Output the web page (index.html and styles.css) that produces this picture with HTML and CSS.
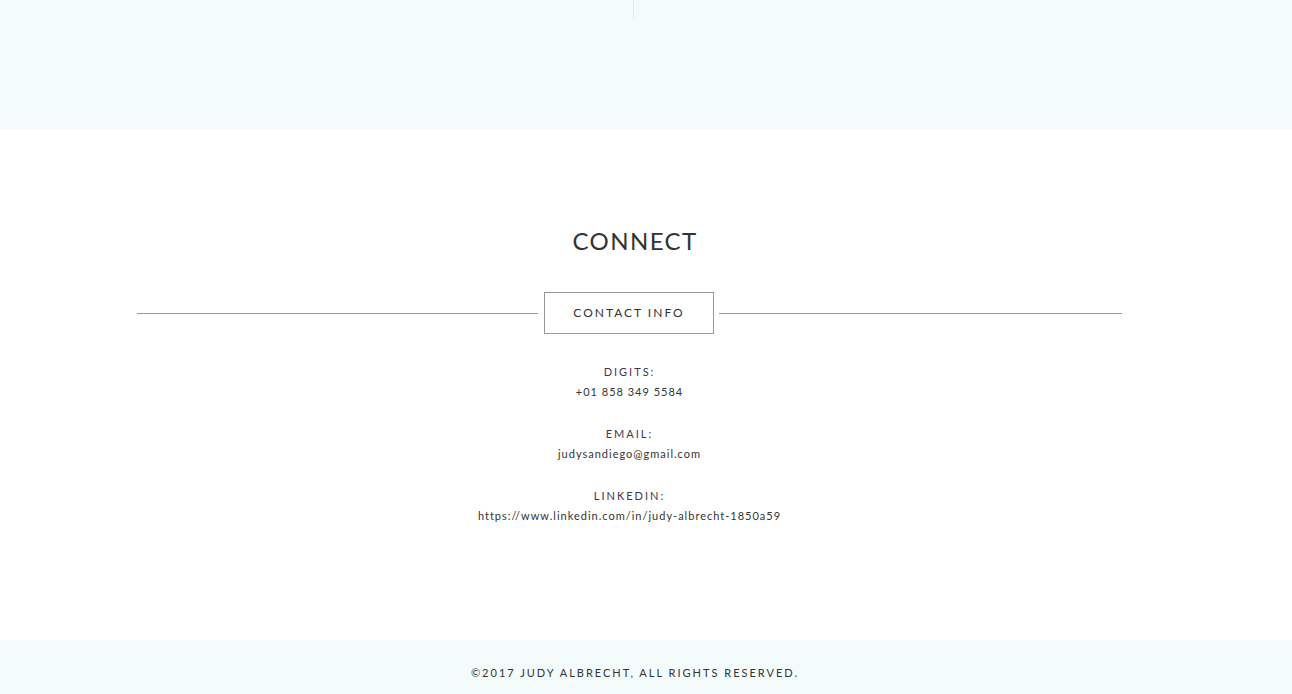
FILE: index.html
```html
<!DOCTYPE html>
<html>
<head>
<meta charset="utf-8">
<link rel="stylesheet" href="styles.css">
</head>
<body>
<section class="top">
  <div class="timeline-end"></div>
</section>
<section class="connect">
  <div class="inner">
    <h2 class="title">CONNECT</h2>
    <div class="content">
      <div class="divider">
        <span class="rule"></span>
        <div class="badge">CONTACT INFO</div>
        <span class="rule"></span>
      </div>
      <div class="info">
        <div class="group">
          <div class="label">DIGITS:</div>
          <div class="value">+01 858 349 5584</div>
        </div>
        <div class="group">
          <div class="label">EMAIL:</div>
          <div class="value">judysandiego@gmail.com</div>
        </div>
        <div class="group">
          <div class="label">LINKEDIN:</div>
          <div class="value">https://www.linkedin.com/in/judy-albrecht-1850a59</div>
        </div>
      </div>
    </div>
  </div>
</section>
<footer class="footer">
  <div class="inner">©2017 JUDY ALBRECHT, ALL RIGHTS RESERVED.</div>
</footer>
</body>
</html>
```
FILE: styles.css
```css
html, body {
  margin: 0;
  padding: 0;
  background: #ffffff;
  font-family: Lato, "Liberation Sans", sans-serif;
  color: #333333;
}

.top {
  height: 129px;
  background: #f3fcfb;
}

.timeline-end {
  width: 1px;
  height: 19px;
  margin-left: 633px;
  background: #e6eaea;
}

.connect {
  height: 511px;
  background: #ffffff;
}

.inner {
  width: 1270px;
}

.title {
  margin: 0;
  padding-top: 97px;
  font-size: 24px;
  line-height: 29px;
  font-weight: 400;
  letter-spacing: 1.4px;
  text-align: center;
  color: #333333;
}

.content {
  width: 985px;
  margin-left: 137px;
}

.divider {
  display: flex;
  align-items: center;
  margin-top: 37px;
}

.rule {
  height: 1px;
  background: #9a9a9a;
}

.rule:first-child {
  width: 401px;
  margin-right: 6px;
}

.rule:last-child {
  flex: 1;
  margin-left: 5px;
}

.badge {
  width: 168px;
  height: 40px;
  border: 1px solid #9a9a9a;
  font-size: 12px;
  line-height: 40px;
  letter-spacing: 2px;
  text-align: center;
  color: #333333;
}

.info {
  margin-top: 28px;
  display: flex;
  flex-direction: column;
  gap: 22px;
  text-align: center;
}

.label {
  font-size: 11px;
  line-height: 20px;
  letter-spacing: 2px;
  color: #45354f;
}

.value {
  font-size: 11px;
  line-height: 20px;
  letter-spacing: 1px;
  color: #333333;
}

.footer {
  height: 54px;
  box-sizing: border-box;
  padding-top: 23px;
  background: #f3fcfb;
}

.footer .inner {
  font-size: 11px;
  line-height: 20px;
  letter-spacing: 2px;
  text-align: center;
  color: #333333;
}
```
